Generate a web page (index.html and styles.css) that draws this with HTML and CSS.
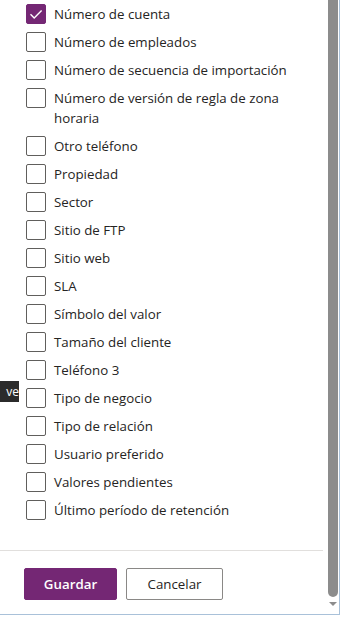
FILE: index.html
```html
<!DOCTYPE html>
<html lang="es">
<head>
<meta charset="utf-8">
<link rel="stylesheet" href="styles.css">
</head>
<body>
<div class="panel">
  <div class="main">
    <div class="list">
      <label class="row"><span class="box checked"><svg viewBox="0 0 20 20" width="20" height="20"><path d="M4.5 10.2 L8.2 13.9 L15.6 6.5" fill="none" stroke="#fff" stroke-width="1.4"/></svg></span><span class="txt">Número de cuenta</span></label>
      <label class="row"><span class="box"></span><span class="txt">Número de empleados</span></label>
      <label class="row"><span class="box"></span><span class="txt">Número de secuencia de importación</span></label>
      <label class="row"><span class="box"></span><span class="txt">Número de versión de regla de zona horaria</span></label>
      <label class="row"><span class="box"></span><span class="txt">Otro teléfono</span></label>
      <label class="row"><span class="box"></span><span class="txt">Propiedad</span></label>
      <label class="row"><span class="box"></span><span class="txt">Sector</span></label>
      <label class="row"><span class="box"></span><span class="txt">Sitio de FTP</span></label>
      <label class="row"><span class="box"></span><span class="txt">Sitio web</span></label>
      <label class="row"><span class="box"></span><span class="txt">SLA</span></label>
      <label class="row"><span class="box"></span><span class="txt">Símbolo del valor</span></label>
      <label class="row"><span class="box"></span><span class="txt">Tamaño del cliente</span></label>
      <label class="row"><span class="box"></span><span class="txt">Teléfono 3</span></label>
      <label class="row"><span class="box"></span><span class="txt">Tipo de negocio</span><span class="tip">ve</span></label>
      <label class="row"><span class="box"></span><span class="txt">Tipo de relación</span></label>
      <label class="row"><span class="box"></span><span class="txt">Usuario preferido</span></label>
      <label class="row"><span class="box"></span><span class="txt">Valores pendientes</span></label>
      <label class="row"><span class="box"></span><span class="txt">Último período de retención</span></label>
    </div>
    <div class="footer">
      <button class="btn primary">Guardar</button>
      <button class="btn secondary">Cancelar</button>
    </div>
  </div>
  <div class="scroll">
    <div class="thumb"></div>
    <div class="arrow"></div>
  </div>
</div>
</body>
</html>
```
FILE: styles.css
```css
html, body {
  margin: 0;
  padding: 0;
  background: #fff;
}
body {
  font-family: "Open Sans", "Noto Sans", sans-serif;
  color: #252423;
}
.panel {
  width: 339px;
  height: 614px;
  display: flex;
  border-right: 1px solid #a9c1d9;
  border-bottom: 1px solid #a9c1d9;
  background: #fff;
}
.main {
  width: 323px;
  display: flex;
  flex-direction: column;
}
.list {
  flex: 1;
  padding: 4px 0 0 26px;
  display: flex;
  flex-direction: column;
  gap: 8px;
}
.row {
  position: relative;
  display: flex;
  align-items: flex-start;
  gap: 8px;
  font-size: 13.3px;
  line-height: 20px;
}
.box {
  flex: none;
  width: 18px;
  height: 18px;
  border: 1px solid #605e5c;
  border-radius: 2px;
  background: #fff;
  position: relative;
}
.box.checked {
  background: #742774;
  border-color: #742774;
}
.box svg {
  position: absolute;
  left: -1px;
  top: -1px;
}
.txt {
  width: 240px;
}
.tip {
  position: absolute;
  left: -26px;
  top: -7px;
  width: 19px;
  height: 21px;
  background: #2b2b2b;
  color: #fff;
  font-size: 12px;
  line-height: 21px;
  overflow: hidden;
  white-space: nowrap;
  direction: rtl;
}
.footer {
  box-sizing: border-box;
  height: 64px;
  border-top: 1px solid #e1dfdd;
  display: flex;
  align-items: flex-start;
  gap: 9px;
  padding: 17px 0 0 24px;
}
.btn {
  height: 32px;
  border-radius: 2px;
  font-family: "Open Sans", "Noto Sans", sans-serif;
  font-size: 13.3px;
  padding: 0;
  margin: 0;
  cursor: pointer;
}
.primary {
  width: 93px;
  background: #742774;
  border: 1px solid #742774;
  color: #fff;
  font-weight: 600;
}
.secondary {
  width: 97px;
  background: #fff;
  border: 1px solid #8a8886;
  color: #252423;
}
.scroll {
  width: 16px;
  display: flex;
  flex-direction: column;
  align-items: flex-start;
  padding-left: 5px;
  box-sizing: border-box;
}
.thumb {
  width: 10px;
  height: 597px;
  background: #8c8c8c;
  border-radius: 0 0 5px 5px;
}
.arrow {
  margin-top: 5px;
  width: 0;
  height: 0;
  border-left: 4px solid transparent;
  border-right: 4px solid transparent;
  border-top: 4px solid #8c8c8c;
  margin-left: 1px;
}
```
